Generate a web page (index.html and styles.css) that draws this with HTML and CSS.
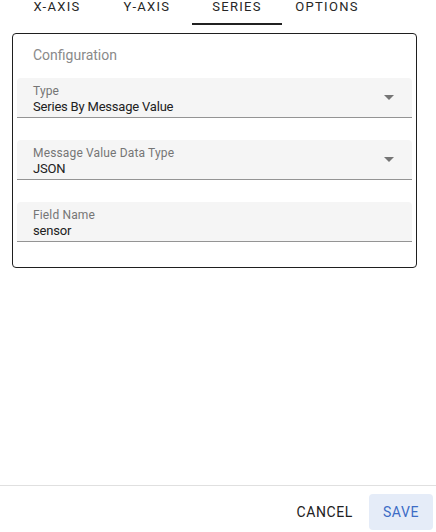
FILE: index.html
```html
<!DOCTYPE html>
<html lang="en">
<head>
<meta charset="utf-8">
<title>Series configuration</title>
<link rel="stylesheet" href="styles.css">
</head>
<body>
<div class="page">
  <div class="main">
    <nav class="tabs">
      <div class="tab">X-AXIS</div>
      <div class="tab">Y-AXIS</div>
      <div class="tab active">SERIES</div>
      <div class="tab">OPTIONS</div>
    </nav>
    <section class="card">
      <div class="card-title">Configuration</div>
      <div class="fields">
        <div class="field">
          <div class="field-text">
            <div class="label">Type</div>
            <div class="value">Series By Message Value</div>
          </div>
          <svg class="arrow" width="10" height="5" viewBox="0 0 10 5"><path d="M0 0h10L5 5z" fill="#757575"/></svg>
        </div>
        <div class="field">
          <div class="field-text">
            <div class="label">Message Value Data Type</div>
            <div class="value">JSON</div>
          </div>
          <svg class="arrow" width="10" height="5" viewBox="0 0 10 5"><path d="M0 0h10L5 5z" fill="#757575"/></svg>
        </div>
        <div class="field">
          <div class="field-text">
            <div class="label">Field Name</div>
            <div class="value">sensor</div>
          </div>
        </div>
      </div>
    </section>
  </div>
  <footer class="actions">
    <button class="btn btn-text">CANCEL</button>
    <button class="btn btn-save">SAVE</button>
  </footer>
</div>
</body>
</html>
```

FILE: styles.css
```css
* { box-sizing: border-box; }
html, body { margin: 0; padding: 0; background: #fff; }
body {
  font-family: Roboto, "Liberation Sans", Arial, sans-serif;
  color: #212121;
}
.page {
  min-height: 532px;
  display: flex;
  flex-direction: column;
}
.main { flex: 1; }

.tabs {
  display: flex;
  padding-left: 12px;
}
.tab {
  width: 90px;
  height: 25px;
  text-align: center;
  font-size: 13px;
  line-height: 14px;
  letter-spacing: 1.3px;
  color: #262626;
  border-bottom: 2px solid transparent;
}
.tab.active { border-bottom-color: #212121; }

.card {
  margin: 8px 0 0 12px;
  width: 405px;
  height: 235px;
  border: 1px solid #1f1f1f;
  border-radius: 4px;
  padding: 12px 4px 0 4px;
}
.card-title {
  font-size: 14px;
  line-height: 19px;
  color: #8a8a8a;
  padding-left: 16px;
  margin-bottom: 13px;
}
.fields {
  display: flex;
  flex-direction: column;
  gap: 22px;
}
.field {
  height: 40px;
  background: #f5f5f5;
  border-radius: 4px 4px 0 0;
  border-bottom: 1px solid #949494;
  display: flex;
  align-items: center;
  padding: 0 18px 0 16px;
}
.field-text {
  flex: 1;
  align-self: flex-start;
  padding-top: 6px;
}
.label {
  font-size: 12px;
  line-height: 15px;
  color: #757575;
  letter-spacing: 0.15px;
}
.value {
  font-size: 13px;
  line-height: 16px;
  color: #212121;
  letter-spacing: -0.2px;
}
.arrow { display: block; margin-bottom: 1px; }

.actions {
  border-top: 1px solid #e0e0e0;
  display: flex;
  justify-content: flex-end;
  gap: 8px;
  padding: 8px 3px 2px 0;
}
.btn {
  font-family: Roboto, "Liberation Sans", Arial, sans-serif;
  font-size: 14px;
  letter-spacing: 0.6px;
  height: 36px;
  border: 0;
  border-radius: 4px;
  background: none;
  cursor: pointer;
}
.btn-text {
  color: #212121;
  padding: 0 8px;
}
.btn-save {
  width: 64px;
  padding: 0;
  background: #e5ecf8;
  color: #3d6cc6;
}
```
